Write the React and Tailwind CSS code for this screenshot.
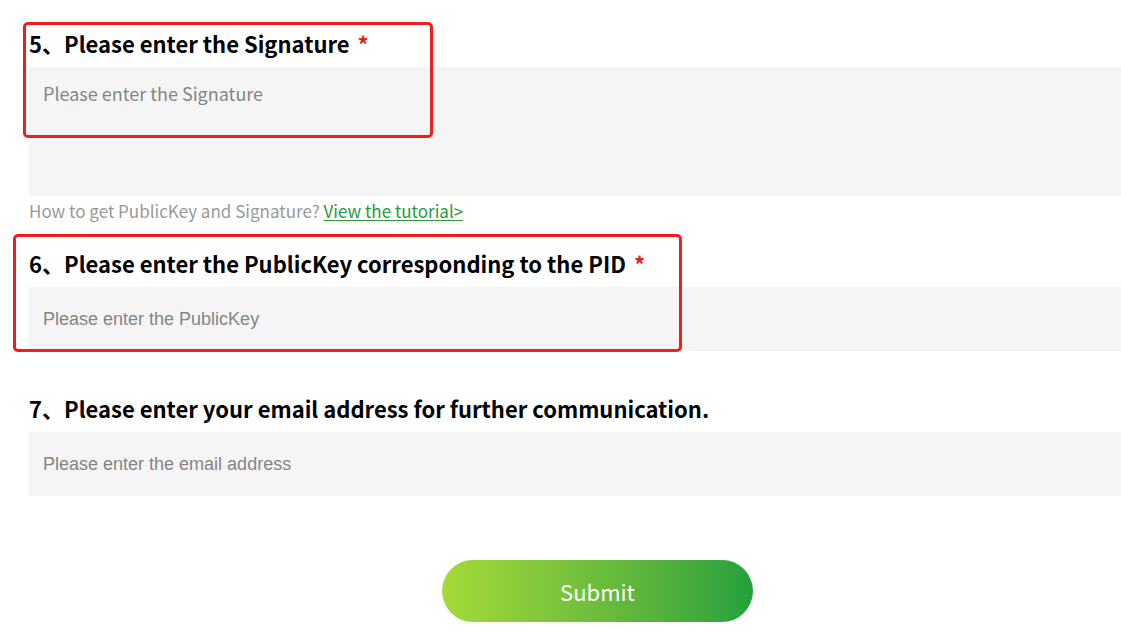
import React from 'react'

// Part of the PID application form: signature, public key, contact email.
// The red rectangles are review annotations laid over the fields.

const heading = "flex h-[44px] items-center pb-[4px] text-[22px] font-bold text-black [font-family:'Noto_Sans_CJK_SC','Open_Sans',sans-serif]"
const field =
  "block w-full bg-[#f5f5f5] px-[14px] text-[18px] text-[#333] outline-none placeholder:text-[#858585] [font-family:'Liberation_Sans',Arial,sans-serif]"

function Star() {
  return <span className="ml-[8px] text-[#e5211d]">*</span>
}

export default function App() {
  return (
    <div className="relative min-h-[642px] w-[1121px] overflow-hidden bg-white pl-[29px] pt-[23px]">
      {/* 5 — signature */}
      <h2 className={heading}>
        5、Please enter the Signature
        <Star />
      </h2>
      <textarea
        className={`${field} h-[129px] resize-none pt-[14px] leading-[24px] [font-family:'Noto_Sans_CJK_SC','Open_Sans',sans-serif] text-[18.5px]`}
        placeholder="Please enter the Signature"
      />
      <div className="h-[47px] pt-[3px] whitespace-nowrap text-[17px] leading-[24px] text-[#999] [font-family:'Noto_Sans_CJK_SC','Open_Sans',sans-serif]">
        How to get PublicKey and Signature?{' '}
        <a href="#" className="text-[#2a9b3d] underline underline-offset-[2px]">
          View the tutorial&gt;
        </a>
      </div>

      {/* 6 — public key */}
      <h2 className={heading}>
        6、Please enter the PublicKey corresponding to the PID
        <Star />
      </h2>
      <input className={`${field} h-[64px]`} placeholder="Please enter the PublicKey" />

      {/* 7 — email */}
      <h2 className={`${heading} mt-[37px]`}>7、Please enter your email address for further communication.</h2>
      <input className={`${field} h-[64px]`} placeholder="Please enter the email address" />

      <button className="ml-[413px] mt-[64px] h-[62px] w-[311px] rounded-full bg-gradient-to-r from-[#a4da37] to-[#22a03c] text-[22px] text-white [font-family:'Noto_Sans_CJK_SC','Open_Sans',sans-serif]">
        Submit
      </button>

      {/* annotation boxes */}
      <div className="pointer-events-none absolute left-[23px] top-[22px] h-[116px] w-[410px] rounded-[5px] border-[3px] border-[#f01e1e]" />
      <div className="pointer-events-none absolute left-[13px] top-[234px] h-[118px] w-[669px] rounded-[5px] border-[3px] border-[#f01e1e]" />
    </div>
  )
}
